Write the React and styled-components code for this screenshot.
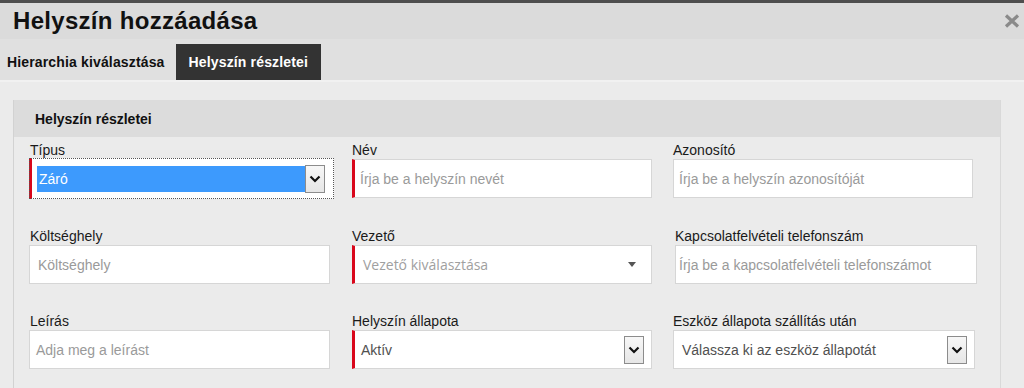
import React from "react";
import styled, { createGlobalStyle } from "styled-components";

const Global = createGlobalStyle`
  html, body { margin: 0; padding: 0; background: #ebebeb; }
  body { font-family: "Liberation Sans", Arial, sans-serif; color: #222; }
  * { box-sizing: border-box; }
`;

const Page = styled.div`
  width: 1024px;
  height: 388px;
  overflow: hidden;
  border-top: 3px solid #4e4e4e;
  background: #ebebeb;
`;

const Header = styled.div`
  height: 36px;
  background: #dbdbdb;
  display: flex;
  align-items: center;
  justify-content: space-between;
  padding: 0 3px 0 13px;
`;

const Title = styled.h1`
  margin: 0;
  font-size: 24px;
  font-weight: 700;
  letter-spacing: 0.3px;
  color: #111;
`;

const Close = styled.button`
  border: 0;
  background: transparent;
  padding: 0;
  width: 18px;
  height: 18px;
  display: flex;
  align-items: center;
  justify-content: center;
  cursor: pointer;
`;

const TabBar = styled.div`
  height: 41px;
  background: #e0e0e0;
  display: flex;
  align-items: flex-end;
`;

const Tab = styled.div`
  height: 36px;
  display: flex;
  align-items: center;
  padding: 0 ${(p) => (p.$active ? "13px" : "11px")} 0 ${(p) => (p.$active ? "13px" : "7px")};
  font-size: 14px;
  font-weight: 700;
  letter-spacing: 0.15px;
  color: ${(p) => (p.$active ? "#fff" : "#111")};
  background: ${(p) => (p.$active ? "#333" : "transparent")};
`;

const Content = styled.div`
  border-top: 2px solid #f1f1f1;
  padding: 18px 23px 0 13px;
`;

const Panel = styled.section`
  border-left: 1px solid #d2d2d2;
  border-right: 1px solid #d9d9d9;
  height: 300px;
`;

const PanelHead = styled.div`
  height: 37px;
  background: #dcdcdc;
  display: flex;
  align-items: center;
  padding-left: 21px;
  font-size: 14px;
  font-weight: 700;
  color: #111;
`;

const Grid = styled.div`
  display: grid;
  grid-template-columns: 302px 300px 302px;
  column-gap: 21px;
  row-gap: 29px;
  padding: 5px 0 0 15px;
`;

const Field = styled.div`
  display: flex;
  flex-direction: column;
`;

const Label = styled.label`
  font-size: 14px;
  line-height: 16px;
  color: #1a1a1a;
  margin-bottom: 1px;
  padding-left: ${(p) => p.$indent || 0}px;
`;

const Box = styled.div`
  height: 39px;
  background: #fff;
  border: 1px solid #d6d6d6;
  border-left: ${(p) => (p.$required ? "3px solid #d9071b" : "1px solid #d6d6d6")};
  display: flex;
  align-items: center;
  justify-content: space-between;
  padding: 0 7px 0 ${(p) => p.$pad ?? 6}px;
  margin-left: ${(p) => p.$shift || 0}px;
  font-size: 14px;
  color: ${(p) => (p.$value ? "#505050" : "#9a9a9a")};
  width: ${(p) => p.$width || "auto"};
`;

const VezetoText = styled.span`
  font-family: "Open Sans", "Liberation Sans", sans-serif;
  font-size: 14px;
  color: #a0a0a0;
`;

const FocusSelect = styled.div`
  height: 41px;
  width: 305px;
  margin-top: -1px;
  background: #fff;
  outline: 1px dotted #555;
  outline-offset: -1px;
  border-left: 3px solid #d9071b;
  display: flex;
  align-items: center;
  padding: 0 9px 0 5px;
`;

const Highlight = styled.div`
  flex: 1;
  height: 26px;
  background: #3d9afd;
  color: #fff;
  font-size: 14px;
  display: flex;
  align-items: center;
  padding-left: 2px;
`;

const DropBtn = styled.div`
  width: 20px;
  height: 28px;
  border: 1px solid #8c8c8c;
  background: linear-gradient(#f7f7f7, #e6e6e6);
  display: flex;
  align-items: center;
  justify-content: center;
  flex-shrink: 0;
`;

const Caret = styled.span`
  width: 0;
  height: 0;
  border-left: 4px solid transparent;
  border-right: 4px solid transparent;
  border-top: 5px solid #555;
  margin-right: 8px;
`;

const Chevron = () => (
  <svg width="12" height="8" viewBox="0 0 12 8">
    <path d="M1.5 1.5 L6 6 L10.5 1.5" fill="none" stroke="#111" strokeWidth="2.2" />
  </svg>
);

export default function App() {
  return (
    <>
      <Global />
      <Page>
        <Header>
          <Title>Helyszín hozzáadása</Title>
          <Close aria-label="Bezárás">
            <svg width="16" height="14" viewBox="0 0 16 14">
              <path d="M2 1.5 L14 12.5 M14 1.5 L2 12.5" stroke="#8a8a8a" strokeWidth="3.2" strokeLinecap="butt" />
            </svg>
          </Close>
        </Header>
        <TabBar>
          <Tab>Hierarchia kiválasztása</Tab>
          <Tab $active>Helyszín részletei</Tab>
        </TabBar>
        <Content>
          <Panel>
            <PanelHead>Helyszín részletei</PanelHead>
            <Grid>
              <Field>
                <Label $indent={1}>Típus</Label>
                <FocusSelect>
                  <Highlight>Záró</Highlight>
                  <DropBtn>
                    <Chevron />
                  </DropBtn>
                </FocusSelect>
              </Field>
              <Field>
                <Label>Név</Label>
                <Box $required $pad={5}>Írja be a helyszín nevét</Box>
              </Field>
              <Field>
                <Label>Azonosító</Label>
                <Box $width="300px" $pad={5}>Írja be a helyszín azonosítóját</Box>
              </Field>

              <Field>
                <Label $indent={1}>Költséghely</Label>
                <Box $width="301px" $pad={8}>Költséghely</Box>
              </Field>
              <Field>
                <Label>Vezető</Label>
                <Box $required $pad={8}>
                  <VezetoText>Vezető kiválasztása</VezetoText>
                  <Caret />
                </Box>
              </Field>
              <Field>
                <Label $indent={2}>Kapcsolatfelvételi telefonszám</Label>
                <Box $width="302px" $pad={3} $shift={2}>
                  Írja be a kapcsolatfelvételi telefonszámot
                </Box>
              </Field>

              <Field>
                <Label $indent={1}>Leírás</Label>
                <Box $width="301px" $pad={6}>Adja meg a leírást</Box>
              </Field>
              <Field>
                <Label>Helyszín állapota</Label>
                <Box $required $value $pad={6}>
                  Aktív
                  <DropBtn>
                    <Chevron />
                  </DropBtn>
                </Box>
              </Field>
              <Field>
                <Label>Eszköz állapota szállítás után</Label>
                <Box $value $width="302px" $pad={8}>
                  Válassza ki az eszköz állapotát
                  <DropBtn>
                    <Chevron />
                  </DropBtn>
                </Box>
              </Field>
            </Grid>
          </Panel>
        </Content>
      </Page>
    </>
  );
}
